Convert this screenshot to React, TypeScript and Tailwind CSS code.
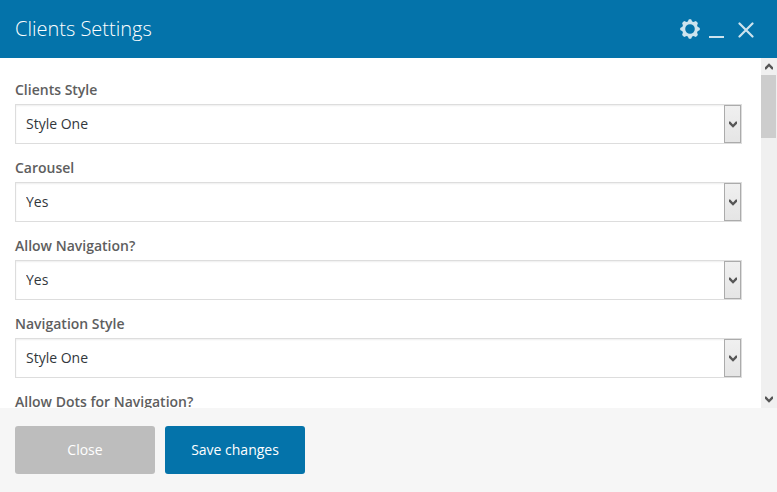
import React from "react";

const fields = [
  { id: "clients-style", label: "Clients Style", options: ["Style One", "Style Two"] },
  { id: "carousel", label: "Carousel", options: ["Yes", "No"] },
  { id: "allow-navigation", label: "Allow Navigation?", options: ["Yes", "No"] },
  { id: "navigation-style", label: "Navigation Style", options: ["Style One", "Style Two"] },
  { id: "allow-dots", label: "Allow Dots for Navigation?", options: ["Yes", "No"] },
];

function Chevron({ up = false }: { up?: boolean }) {
  return (
    <svg width="8" height="7" viewBox="0 0 8 7" fill="#555555" className={up ? "rotate-180" : ""} aria-hidden="true">
      <path d="M0 0.6L1.2 0.6L4 3.4L6.8 0.6L8 0.6V2.8L4 6.8L0 2.8Z" />
    </svg>
  );
}

function Field({ id, label, options }: { id: string; label: string; options: string[] }) {
  return (
    <div className="flex shrink-0 flex-col gap-0.5">
      <label htmlFor={id} className="text-sm leading-6 font-semibold text-[#5e5e5e]">
        {label}
      </label>
      <div className="relative">
        <select
          id={id}
          className="block h-10 w-full appearance-none border border-[#dddddd] bg-white px-2.5 text-sm text-[#32373c] shadow-[inset_0_1px_2px_rgba(0,0,0,0.07)] outline-none"
        >
          {options.map((option) => (
            <option key={option}>{option}</option>
          ))}
        </select>
        <span className="pointer-events-none absolute inset-y-px right-px flex w-[17px] items-center justify-center border border-[#ababab] bg-linear-to-b from-[#f0f0f0] to-[#e5e5e5]">
          <Chevron />
        </span>
      </div>
    </div>
  );
}

function Header() {
  return (
    <header className="flex h-[58px] shrink-0 items-center justify-between bg-[#0473aa] pr-[22px] pl-[15px]">
      <h1 className="text-xl font-light text-white">Clients Settings</h1>
      <div className="flex items-center text-[#cde3ee]">
        <button type="button" aria-label="Settings" className="mr-[7px]">
          <svg width="22" height="22" viewBox="0 0 22 22" fill="currentColor" className="block">
            <path
              fillRule="evenodd"
              d="M9.9 1.2H12.1L13.2 3.4L14.4 3.9L16.9 3.1L18.9 5.1L18.1 7.6L18.6 8.8L20.8 9.9V12.1L18.6 13.2L18.1 14.4L18.9 16.9L16.9 18.9L14.4 18.1L13.2 18.6L12.1 20.8H9.9L8.8 18.6L7.6 18.1L5.1 18.9L3.1 16.9L3.9 14.4L3.4 13.2L1.2 12.1V9.9L3.4 8.8L3.9 7.6L3.1 5.1L5.1 3.1L7.6 3.9L8.8 3.4ZM11 6.2A4.8 4.8 0 1 0 11 15.8A4.8 4.8 0 1 0 11 6.2Z"
            />
          </svg>
        </button>
        <button type="button" aria-label="Minimize" className="mr-3">
          <svg width="17" height="20" viewBox="0 0 17 20" fill="currentColor" className="block">
            <path d="M1 17H16V19H1Z" />
          </svg>
        </button>
        <button type="button" aria-label="Close window">
          <svg width="18" height="18" viewBox="0 0 18 18" fill="none" stroke="currentColor" strokeWidth="2.2" strokeLinecap="round" className="block">
            <path d="M2.5 3.5L15.5 16.5M15.5 3.5L2.5 16.5" />
          </svg>
        </button>
      </div>
    </header>
  );
}

function Scrollbar() {
  return (
    <div className="flex w-4 shrink-0 flex-col bg-[#f0f0f0]">
      <button type="button" aria-label="Scroll up" className="flex h-[17px] items-center justify-center">
        <Chevron up />
      </button>
      <div className="flex-1 pr-px">
        <div className="h-[63px] bg-[#cdcdcd]" />
      </div>
      <button type="button" aria-label="Scroll down" className="flex h-[17px] items-center justify-center">
        <Chevron />
      </button>
    </div>
  );
}

export default function App() {
  return (
    <div className="flex h-screen flex-col bg-white font-['Open_Sans',sans-serif]">
      <Header />
      <main className="flex min-h-0 flex-1">
        <form className="flex min-w-0 flex-1 flex-col gap-3 overflow-hidden pt-5 pr-[19px] pl-[15px]">
          {fields.map((field) => (
            <Field key={field.id} {...field} />
          ))}
        </form>
        <Scrollbar />
      </main>
      <footer className="flex shrink-0 gap-2.5 bg-[#f6f6f6] px-[15px] py-[18px]">
        <button type="button" className="h-12 w-[140px] rounded-[3px] bg-[#bdbdbd] text-sm text-white">
          Close
        </button>
        <button type="button" className="h-12 w-[140px] rounded-[3px] bg-[#0473aa] text-sm text-white">
          Save changes
        </button>
      </footer>
    </div>
  );
}
